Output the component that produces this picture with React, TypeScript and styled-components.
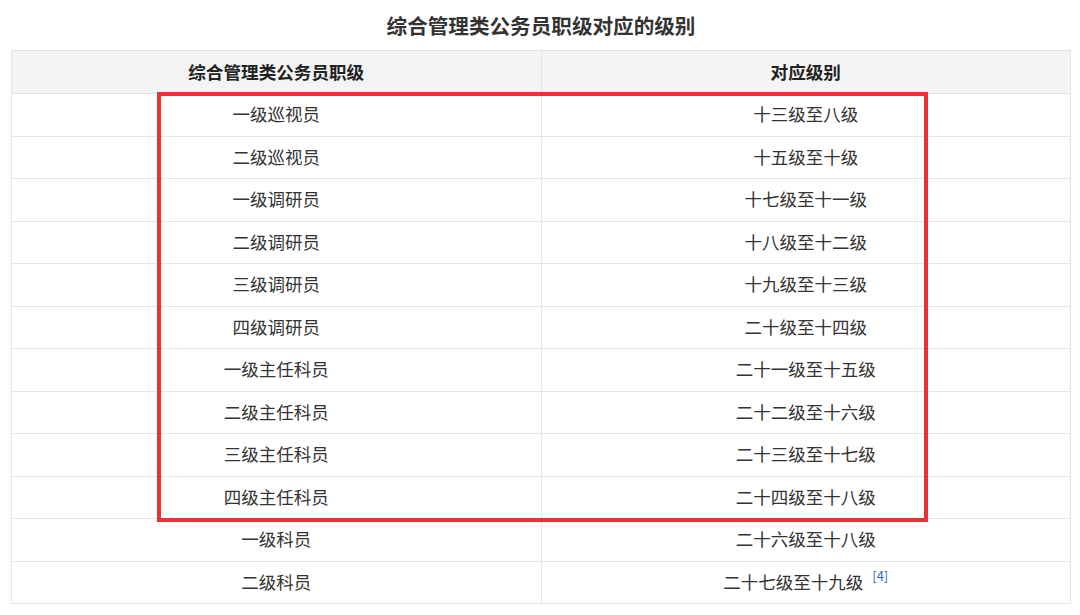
import React from 'react';
import styled, { createGlobalStyle } from 'styled-components';

const GlobalStyle = createGlobalStyle`
  body {
    margin: 0;
    background: #ffffff;
    font-family: "Noto Sans CJK SC", "Noto Sans", sans-serif;
  }
`;

const Page = styled.div`
  width: 1080px;
  padding: 10px 9px 0 11px;
  box-sizing: border-box;
  display: flex;
  flex-direction: column;
  align-items: stretch;
`;

const Title = styled.h2`
  margin: 0;
  flex-shrink: 0;
  height: 40px;
  line-height: 30px;
  text-align: center;
  font-size: 20.6px;
  font-weight: 700;
  color: #333333;
`;

const TableWrap = styled.div`
  position: relative;
  flex-shrink: 0;
`;

const Table = styled.table`
  width: 100%;
  border-collapse: collapse;
  table-layout: fixed;
  border: 1px solid #e3e3e3;
`;

const HeadCell = styled.th`
  height: 40px;
  padding: 0 0 2px;
  background: #f4f4f4;
  border: 1px solid #e3e3e3;
  font-size: 17.6px;
  font-weight: 700;
  color: #222222;
  text-align: center;
`;

const Cell = styled.td`
  height: 39.5px;
  padding: 0 0 2px;
  border: 1px solid #e6e6e6;
  font-size: 17.5px;
  color: #333333;
  text-align: center;
`;

const Ref = styled.sup`
  margin-left: 9px;
  font-size: 13px;
  color: #3366cc;
  vertical-align: 8px;
  line-height: 0;
`;

const Highlight = styled.div`
  position: absolute;
  left: 146px;
  top: 42px;
  width: 771px;
  height: 430px;
  box-sizing: border-box;
  border: 4px solid #ec3038;
  pointer-events: none;
`;

const rows: [string, string, string?][] = [
  ['一级巡视员', '十三级至八级'],
  ['二级巡视员', '十五级至十级'],
  ['一级调研员', '十七级至十一级'],
  ['二级调研员', '十八级至十二级'],
  ['三级调研员', '十九级至十三级'],
  ['四级调研员', '二十级至十四级'],
  ['一级主任科员', '二十一级至十五级'],
  ['二级主任科员', '二十二级至十六级'],
  ['三级主任科员', '二十三级至十七级'],
  ['四级主任科员', '二十四级至十八级'],
  ['一级科员', '二十六级至十八级'],
  ['二级科员', '二十七级至十九级', '[4]'],
];

export default function App() {
  return (
    <>
      <GlobalStyle />
      <Page>
        <Title>综合管理类公务员职级对应的级别</Title>
        <TableWrap>
          <Table>
            <thead>
              <tr>
                <HeadCell>综合管理类公务员职级</HeadCell>
                <HeadCell>对应级别</HeadCell>
              </tr>
            </thead>
            <tbody>
              {rows.map(([rank, level, note]) => (
                <tr key={rank}>
                  <Cell>{rank}</Cell>
                  <Cell>
                    {level}
                    {note && <Ref>{note}</Ref>}
                  </Cell>
                </tr>
              ))}
            </tbody>
          </Table>
          <Highlight />
        </TableWrap>
      </Page>
    </>
  );
}
